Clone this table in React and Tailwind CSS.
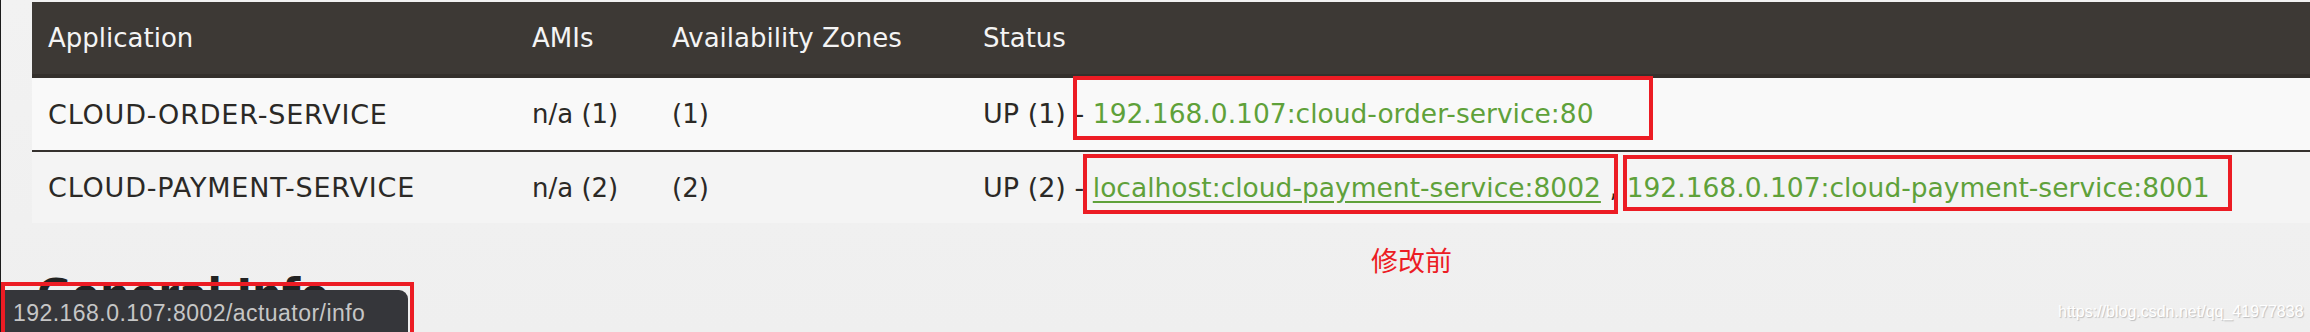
import React from 'react';

const cols = 'grid grid-cols-[484px_140px_311px_1fr] items-center';
const link = 'text-[#5fa13a] text-[26.5px]';

// annotation boxes drawn over the screenshot
const boxes = [
  'left-[1072px] top-[76px] w-[580px] h-[64px]',
  'left-[1082px] top-[154px] w-[535px] h-[60px]',
  'left-[1622px] top-[155px] w-[609px] h-[56px]',
  'left-0 top-[282px] w-[413px] h-[60px]',
];

export default function App() {
  return (
    <div className="relative w-[2310px] h-[332px] overflow-hidden bg-gradient-to-b from-[#f2f2f2] to-[#efefef] border-l border-[#1c1c1c] font-['DejaVu_Sans',sans-serif]">
      <div className="pt-[2px] pl-[31px]">
        {/* apps table */}
        <div className="leading-none">
          <div className={`${cols} h-[76px] bg-[#3d3935] border-b-4 border-[#34302c] text-[26px] text-[#f4f4f4]`}>
            <div className="pl-[16px]">Application</div>
            <div className="pl-[16px]">AMIs</div>
            <div className="pl-[16px]">Availability Zones</div>
            <div className="pl-[16px]">Status</div>
          </div>
          <div className={`${cols} h-[74px] bg-[#f9f9f9] border-b-2 border-[#35312e] text-[27px] text-[#2b2926]`}>
            <div className="pl-[16px] tracking-[0.03em]">CLOUD-ORDER-SERVICE</div>
            <div className="pl-[16px] text-[26px]">n/a (1)</div>
            <div className="pl-[16px] text-[26px]">(1)</div>
            <div className="pl-[16px] whitespace-nowrap">
              UP (1) - <span className={link}>192.168.0.107:cloud-order-service:80</span>
            </div>
          </div>
          <div className={`${cols} h-[71px] bg-[#f4f4f4] text-[27px] text-[#2b2926]`}>
            <div className="pl-[16px] tracking-[0.03em]">CLOUD-PAYMENT-SERVICE</div>
            <div className="pl-[16px] text-[26px]">n/a (2)</div>
            <div className="pl-[16px] text-[26px]">(2)</div>
            <div className="pl-[16px] whitespace-nowrap">
              UP (2) - <span className={`${link} underline underline-offset-4`}>localhost:cloud-payment-service:8002</span>
              {' , '}
              <span className={link}>192.168.0.107:cloud-payment-service:8001</span>
            </div>
          </div>
        </div>

        <h2 className="mt-[51px] pl-[5px] text-[42px] leading-none font-bold text-[#222]">General Info</h2>
      </div>

      {/* chrome status bubble */}
      <div className="absolute left-[4px] top-[290px] w-[403px] h-[50px] bg-[#35363a] rounded-tr-[9px] pl-[8px] pt-[12px] text-[23px] leading-none text-[#c6c6c6] font-['Liberation_Sans',sans-serif] tracking-[0.02em] whitespace-nowrap">
        192.168.0.107:8002/actuator/info
      </div>

      <div className="absolute left-[1370px] top-[246px] text-[27px] leading-none text-[#ec1c24] font-['Noto_Sans_CJK_SC',sans-serif]">
        修改前
      </div>

      <div className="absolute left-[2057px] top-[304px] text-[16px] leading-none text-white font-['Liberation_Sans',sans-serif] [text-shadow:1px_1px_1px_#bdbdbd] whitespace-nowrap">
        https://blog.csdn.net/qq_41977838
      </div>

      {boxes.map((b) => (
        <div key={b} className={`absolute ${b} border-4 border-[#ec1c24]`} />
      ))}
    </div>
  );
}
